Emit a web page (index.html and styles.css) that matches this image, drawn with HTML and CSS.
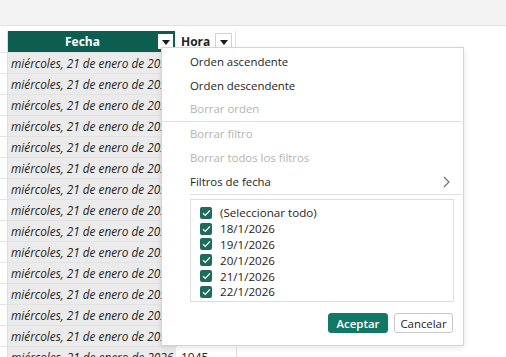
FILE: index.html
```html
<!DOCTYPE html>
<html lang="es">
<head>
<meta charset="utf-8">
<link rel="stylesheet" href="styles.css">
</head>
<body>
<div class="topbar"></div>
<div class="table">
  <div class="row head">
    <div class="rh"></div>
    <div class="cell fecha-h">Fecha<span class="dd dd-dark"><i class="tri"></i></span></div>
    <div class="cell hora-h">Hora<span class="dd"><i class="tri"></i></span></div>
  </div>
  <div class="row"><div class="rh"></div><div class="cell f">miércoles, 21 de enero de 2026</div></div>
  <div class="row"><div class="rh"></div><div class="cell f">miércoles, 21 de enero de 2026</div></div>
  <div class="row"><div class="rh"></div><div class="cell f">miércoles, 21 de enero de 2026</div></div>
  <div class="row"><div class="rh"></div><div class="cell f">miércoles, 21 de enero de 2026</div></div>
  <div class="row"><div class="rh"></div><div class="cell f">miércoles, 21 de enero de 2026</div></div>
  <div class="row"><div class="rh"></div><div class="cell f">miércoles, 21 de enero de 2026</div></div>
  <div class="row"><div class="rh"></div><div class="cell f">miércoles, 21 de enero de 2026</div></div>
  <div class="row"><div class="rh"></div><div class="cell f">miércoles, 21 de enero de 2026</div></div>
  <div class="row"><div class="rh"></div><div class="cell f">miércoles, 21 de enero de 2026</div></div>
  <div class="row"><div class="rh"></div><div class="cell f">miércoles, 21 de enero de 2026</div></div>
  <div class="row"><div class="rh"></div><div class="cell f">miércoles, 21 de enero de 2026</div></div>
  <div class="row"><div class="rh"></div><div class="cell f">miércoles, 21 de enero de 2026</div></div>
  <div class="row"><div class="rh"></div><div class="cell f">miércoles, 21 de enero de 2026</div></div>
  <div class="row"><div class="rh"></div><div class="cell f">miércoles, 21 de enero de 2026</div></div>
  <div class="row"><div class="rh"></div><div class="cell f">miércoles, 21 de enero de 2026</div><div class="cell h">1945</div></div>
</div>

<div class="menu">
  <div class="item">Orden ascendente</div>
  <div class="item">Orden descendente</div>
  <div class="item dis short">Borrar orden</div>
  <div class="sep"></div>
  <div class="item dis">Borrar filtro</div>
  <div class="item dis">Borrar todos los filtros</div>
  <div class="item sub">Filtros de fecha
    <svg class="chev" width="7" height="12" viewBox="0 0 7 12"><polyline points="1,1 6,6 1,11" fill="none" stroke="#6b6b6b" stroke-width="1.1"/></svg>
  </div>
  <div class="sep sep2"></div>
  <div class="list">
    <label class="opt"><span class="cb"><svg width="9" height="8" viewBox="0 0 9 8"><polyline points="1,4.2 3.3,6.4 8,1.4" fill="none" stroke="#fff" stroke-width="1.3"/></svg></span>(Seleccionar todo)</label>
    <label class="opt"><span class="cb"><svg width="9" height="8" viewBox="0 0 9 8"><polyline points="1,4.2 3.3,6.4 8,1.4" fill="none" stroke="#fff" stroke-width="1.3"/></svg></span>18/1/2026</label>
    <label class="opt"><span class="cb"><svg width="9" height="8" viewBox="0 0 9 8"><polyline points="1,4.2 3.3,6.4 8,1.4" fill="none" stroke="#fff" stroke-width="1.3"/></svg></span>19/1/2026</label>
    <label class="opt"><span class="cb"><svg width="9" height="8" viewBox="0 0 9 8"><polyline points="1,4.2 3.3,6.4 8,1.4" fill="none" stroke="#fff" stroke-width="1.3"/></svg></span>20/1/2026</label>
    <label class="opt"><span class="cb"><svg width="9" height="8" viewBox="0 0 9 8"><polyline points="1,4.2 3.3,6.4 8,1.4" fill="none" stroke="#fff" stroke-width="1.3"/></svg></span>21/1/2026</label>
    <label class="opt"><span class="cb"><svg width="9" height="8" viewBox="0 0 9 8"><polyline points="1,4.2 3.3,6.4 8,1.4" fill="none" stroke="#fff" stroke-width="1.3"/></svg></span>22/1/2026</label>
  </div>
  <div class="buttons">
    <button class="btn ok">Aceptar</button>
    <button class="btn cancel">Cancelar</button>
  </div>
</div>
</body>
</html>
```

FILE: styles.css
```css
html, body {
  margin: 0;
  padding: 0;
  background: #fff;
  font-family: "Open Sans", "Noto Sans", sans-serif;
  font-size: 12px;
  color: #252423;
  overflow: hidden;
  width: 506px;
  height: 357px;
}

.topbar {
  height: 25px;
  background: #f3f3f3;
  border-bottom: 1px solid #e1e1e1;
  margin-bottom: 5px;
}

.table {
  display: flex;
  flex-direction: column;
  align-items: flex-start;
}

.row {
  display: flex;
  height: 20px;
  border-bottom: 1px solid #e3e3e3;
  flex: none;
}

.row.head {
  height: 21px;
}

.rh {
  width: 7px;
  border-right: 1px solid #dcdcdc;
  background: #fff;
  flex: none;
}

.cell {
  box-sizing: border-box;
  flex: none;
  display: flex;
  align-items: center;
  white-space: nowrap;
  overflow: hidden;
}

.fecha-h {
  width: 168px;
  background: #0d5e50;
  color: #fff;
  font-weight: 700;
  justify-content: center;
  position: relative;
  padding-right: 18px;
  border-right: 1px solid #fff;
}

.hora-h {
  width: 60px;
  background: #fff;
  color: #252423;
  font-weight: 700;
  padding-left: 5px;
  position: relative;
  border-right: 1px solid #e0e0e0;
}

.dd {
  position: absolute;
  top: 2px;
  right: 3px;
  width: 15px;
  height: 15px;
  background: #fff;
  border: 1px solid #d2d2d2;
  display: flex;
  align-items: center;
  justify-content: center;
}

.dd-dark {
  border-color: #0d5e50;
  right: 1px;
}

.tri {
  width: 0;
  height: 0;
  border-left: 4px solid transparent;
  border-right: 4px solid transparent;
  border-top: 5px solid #1b1b1b;
  margin-top: 1px;
}

.cell.f {
  width: 169px;
  background: #ebebeb;
  font-style: italic;
  color: #252423;
  padding-left: 3px;
  border-right: 1px solid #fff;
  font-size: 11.8px;
}

.cell.h {
  width: 60px;
  background: #fff;
  padding-left: 4px;
  border-right: 1px solid #e0e0e0;
}

/* Menu */
.menu {
  position: absolute;
  left: 161px;
  top: 47px;
  width: 301px;
  height: 295px;
  background: #fff;
  border: 1px solid #d4d4d4;
  box-shadow: 0 2px 6px rgba(0, 0, 0, 0.10);
  padding-top: 2px;
  font-size: 11.4px;
}

.item {
  height: 24px;
  line-height: 24px;
  padding-left: 28px;
  color: #252423;
  position: relative;
}

.item.dis {
  color: #b3b3b3;
}

.item.short {
  height: 23px;
  line-height: 22px;
}

.sep {
  height: 1px;
  background: #e1e1e1;
  margin-right: 1px;
}

.sep2 {
  margin-left: 28px;
}

.chev {
  position: absolute;
  right: 13px;
  top: 6px;
}

.list {
  margin: 4px 9px 0 28px;
  height: 96px;
  border: 1px solid #dedede;
  padding-top: 5px;
  display: flex;
  flex-direction: column;
  font-size: 11.6px;
}

.opt {
  display: flex;
  align-items: center;
  height: 15.8px;
  padding-left: 9px;
  gap: 8px;
  color: #252423;
}

.cb {
  width: 12px;
  height: 12px;
  border-radius: 2px;
  background: #1f6a5d;
  display: flex;
  align-items: center;
  justify-content: center;
  flex: none;
}

.buttons {
  display: flex;
  justify-content: flex-end;
  gap: 6px;
  margin-top: 11px;
  padding-right: 10px;
}

.btn {
  font-family: inherit;
  font-size: 11.4px;
  height: 20px;
  border-radius: 3px;
  padding: 0;
  display: flex;
  align-items: center;
  justify-content: center;
}

.btn.ok {
  width: 60px;
  background: #117865;
  border: 1px solid #117865;
  color: #fff;
  font-weight: 600;
}

.btn.cancel {
  width: 59px;
  background: #fff;
  border: 1px solid #c8c8c8;
  color: #252423;
}
```
